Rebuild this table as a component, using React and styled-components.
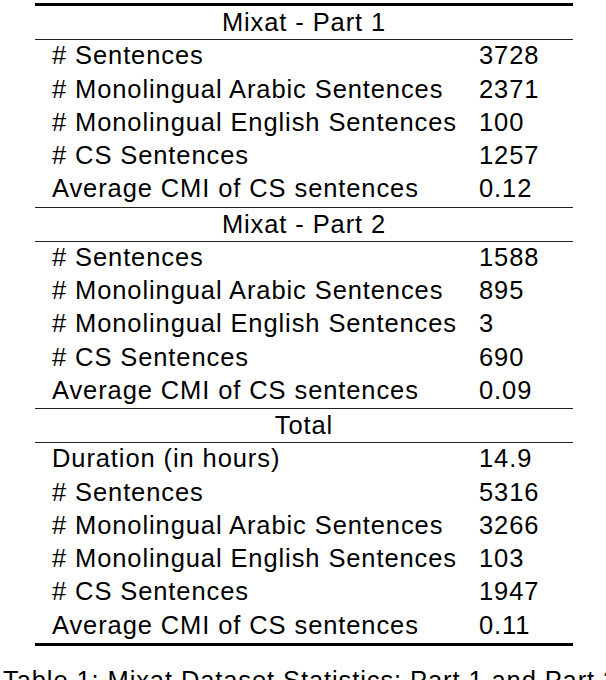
import React from 'react'
import styled, { createGlobalStyle } from "styled-components";

const GlobalStyle = createGlobalStyle`
    html, body {
        margin: 0;
        padding: 0;
        background: #ffffff;
        overflow: hidden;
    }
    body {
        font-family: "Liberation Sans", Arial, Helvetica, sans-serif;
        color: #000000;
    }
`;

const Page = styled.div`
    padding-top: 3px;
    width: 606px;
    height: 680px;
`;

const Table = styled.div`
    width: 538px;
    margin-left: 35px;
    border-top: 3px solid #000;
    border-bottom: 3px solid #000;
    font-size: 25.5px;
    letter-spacing: 0.9px;
`;

const Section = styled.div`
    & + & {
        border-top: 1px solid #222;
    }
`;

const SectionTitle = styled.div`
    height: 33.25px;
    line-height: 32px;
    text-align: center;
    border-bottom: 1px solid #222;
`;

const Row = styled.div`
    display: grid;
    grid-template-columns: 427px 1fr;
    padding-left: 17px;
    height: 33.25px;
    line-height: 31px;
    white-space: nowrap;
`;

const Caption = styled.div`
    margin-top: 20px;
    padding-left: 3px;
    font-size: 25.5px;
    letter-spacing: 0.9px;
    white-space: nowrap;
`;

const sections = [
    {
        title: 'Mixat - Part 1',
        rows: [
            ['# Sentences', '3728'],
            ['# Monolingual Arabic Sentences', '2371'],
            ['# Monolingual English Sentences', '100'],
            ['# CS Sentences', '1257'],
            ['Average CMI of CS sentences', '0.12'],
        ],
    },
    {
        title: 'Mixat - Part 2',
        rows: [
            ['# Sentences', '1588'],
            ['# Monolingual Arabic Sentences', '895'],
            ['# Monolingual English Sentences', '3'],
            ['# CS Sentences', '690'],
            ['Average CMI of CS sentences', '0.09'],
        ],
    },
    {
        title: 'Total',
        rows: [
            ['Duration (in hours)', '14.9'],
            ['# Sentences', '5316'],
            ['# Monolingual Arabic Sentences', '3266'],
            ['# Monolingual English Sentences', '103'],
            ['# CS Sentences', '1947'],
            ['Average CMI of CS sentences', '0.11'],
        ],
    },
];

const App = () => {
  return (
    <Page>
        <GlobalStyle />
        <Table>
            {sections.map(section => (
                <Section key={section.title}>
                    <SectionTitle>{section.title}</SectionTitle>
                    {section.rows.map(([label, value]) => (
                        <Row key={label}>
                            <span>{label}</span>
                            <span>{value}</span>
                        </Row>
                    ))}
                </Section>
            ))}
        </Table>
        <Caption>Table 1: Mixat Dataset Statistics: Part 1 and Part 2.</Caption>
    </Page>
  );
}

export default App
